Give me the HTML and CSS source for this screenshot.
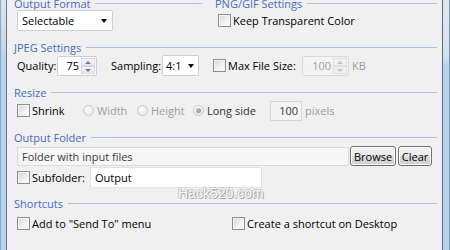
FILE: index.html
```html
<!DOCTYPE html>
<html>
<head>
<meta charset="utf-8">
<link rel="stylesheet" href="styles.css">
</head>
<body>
<div class="window">
  <div class="frame frame-left"></div>
  <main class="content">
    <div class="top-row">
      <section class="group group-format">
        <div class="legend"><span>Output Format</span><i></i></div>
        <div class="body">
          <div class="select select-format"><span>Selectable</span><b class="arrow"></b></div>
        </div>
      </section>
      <section class="group group-png">
        <div class="legend"><span>PNG/GIF Settings</span><i></i></div>
        <div class="body">
          <label class="check"><span class="box"></span><span>Keep Transparent Color</span></label>
        </div>
      </section>
    </div>

    <section class="group group-jpeg">
      <div class="legend"><span>JPEG Settings</span><i></i></div>
      <div class="body">
        <span class="lbl w-quality">Quality:</span>
        <div class="spin spin-quality"><span class="val">75</span><span class="spin-btns"><span class="up"></span><span class="down"></span></span></div>
        <span class="lbl w-sampling">Sampling:</span>
        <div class="select select-sampling"><span>4:1</span><b class="arrow"></b></div>
        <label class="check w-maxsize"><span class="box"></span><span>Max File Size:</span></label>
        <div class="spin spin-size disabled"><span class="val">100</span><span class="spin-btns"><span class="up"></span><span class="down"></span></span></div>
        <span class="lbl dim">KB</span>
      </div>
    </section>

    <section class="group group-resize">
      <div class="legend"><span>Resize</span><i></i></div>
      <div class="body">
        <label class="check w-shrink"><span class="box"></span><span>Shrink</span></label>
        <label class="radio w-width dim"><span class="dot"></span><span>Width</span></label>
        <label class="radio w-height dim"><span class="dot"></span><span>Height</span></label>
        <label class="radio w-long"><span class="dot on"></span><span>Long side</span></label>
        <div class="field field-px">100</div>
        <span class="lbl dim">pixels</span>
      </div>
    </section>

    <section class="group group-folder">
      <div class="legend"><span>Output Folder</span><i></i></div>
      <div class="body">
        <div class="field field-folder">Folder with input files</div>
        <button class="btn btn-browse">Browse</button>
        <button class="btn btn-clear">Clear</button>
      </div>
      <div class="body body-sub">
        <label class="check w-sub"><span class="box"></span><span>Subfolder:</span></label>
        <div class="field field-sub">Output</div>
      </div>
    </section>

    <section class="group group-short">
      <div class="legend"><span>Shortcuts</span><i></i></div>
      <div class="body">
        <label class="check w-sendto"><span class="box"></span><span>Add to "Send To" menu</span></label>
        <label class="check"><span class="box"></span><span>Create a shortcut on Desktop</span></label>
      </div>
    </section>

    <div class="watermark">Hack520.com</div>
  </main>
  <div class="frame frame-right"></div>
</div>
</body>
</html>
```

FILE: styles.css
```css
html, body {
  margin: 0;
  padding: 0;
}
body {
  width: 450px;
  height: 250px;
  overflow: hidden;
  background: #f0f0f0;
  font-family: "Open Sans", "Liberation Sans", sans-serif;
  font-size: 11px;
  color: #000;
}
.window {
  display: flex;
  height: 250px;
}
.frame-left {
  width: 7px;
  flex: none;
  background:
    linear-gradient(to right, #8fa4bf 0 1px, transparent 1px 6px, #6a7688 6px 7px),
    linear-gradient(to bottom, #dbe4ee 0, #c6d8ec 45px, #b6d3f2 60px, #b6d3f2 100%);
}
.frame-right {
  width: 8px;
  flex: none;
  background:
    linear-gradient(to right, #5e6979 0 1px, transparent 1px 7px, #7d93ae 7px 8px),
    linear-gradient(to bottom, #e1e8f0 0, #d4e2f0 55px, #b6d3f2 65px, #b6d3f2 100%);
}
.content {
  position: relative;
  flex: 1;
  padding: 0 5px 0 7px;
}
.top-row {
  display: flex;
  margin-top: -4px;
}
.group-format { width: 188px; margin-right: 13px; }
.group-png { flex: 1; }

.legend {
  display: flex;
  align-items: center;
  height: 14px;
  color: #4b69c6;
  white-space: nowrap;
}
.legend span { padding-right: 5px; }
.legend i {
  flex: 1;
  height: 1px;
  background: #b3bee9;
}
.body {
  display: flex;
  align-items: center;
  height: 21px;
  padding-left: 3px;
  white-space: nowrap;
}
.group-jpeg { margin-top: 9px; }
.group-jpeg .body { margin-top: 1px; }
.group-resize { margin-top: 9px; }
.group-resize .body { margin-top: 1px; }
.group-folder { margin-top: 9px; }
.group-folder .body { margin-top: 2px; height: 20px; }
.group-folder .body-sub { margin-top: 1px; height: 21px; }
.group-short { margin-top: 8px; }
.group-short .body { margin-top: 3px; }

/* labels */
.lbl { display: inline-block; }
.dim { color: #9d9d9d; }
.w-quality { width: 40px; }
.w-sampling { width: 51px; }
.w-maxsize { width: 89px; }
.w-shrink { width: 66px; }
.w-width { width: 54px; }
.w-height { width: 56px; }
.w-long { width: 77px; color: #333; }
.w-sub { width: 73px; }
.w-sendto { width: 215px; }

/* select */
.select {
  position: relative;
  box-sizing: border-box;
  height: 21px;
  background: #fff;
  border: 1px solid #cfcfcf;
  border-radius: 2px;
  display: flex;
  align-items: center;
  padding-left: 4px;
}
.select-format { width: 96px; }
.select-sampling { width: 37px; margin-right: 14px; padding-left: 3px; }
.select .arrow {
  position: absolute;
  right: 5px;
  top: 8px;
  width: 0;
  height: 0;
  border-left: 3.5px solid transparent;
  border-right: 3.5px solid transparent;
  border-top: 4px solid #000;
}
.select-sampling .arrow { right: 4px; }

/* checkbox */
.check, .radio {
  display: inline-flex;
  align-items: center;
}
.box {
  box-sizing: border-box;
  width: 13px;
  height: 13px;
  border: 1px solid #8e8f8f;
  background: linear-gradient(135deg, #d6d6d6 0%, #f2f2f2 60%, #fcfcfc 100%);
  box-shadow: inset 0 0 0 1px #f4f4f4;
  margin-right: 2px;
  flex: none;
}
.dot {
  box-sizing: border-box;
  width: 11px;
  height: 11px;
  border: 1px solid #c9c9c9;
  border-radius: 50%;
  background: radial-gradient(circle at 40% 35%, #fafafa, #e6e6e6);
  margin-right: 3px;
  flex: none;
  position: relative;
}
.dot.on::after {
  content: "";
  position: absolute;
  left: 2px;
  top: 2px;
  width: 5px;
  height: 5px;
  border-radius: 50%;
  background: radial-gradient(circle at 40% 35%, #bdbdbd, #8a8a8a);
}

/* spin */
.spin {
  box-sizing: border-box;
  height: 20px;
  background: #fff;
  border: 1px solid #cfcfcf;
  border-radius: 2px;
  display: flex;
  align-items: stretch;
}
.spin-quality { width: 40px; margin-right: 14px; }
.spin-size { width: 47px; margin-right: 3px; }
.spin .val {
  flex: 1;
  text-align: right;
  padding-right: 2px;
  line-height: 18px;
}
.spin-btns {
  width: 14px;
  display: flex;
  flex-direction: column;
  padding: 1px 1px 1px 0;
}
.spin-btns span {
  flex: 1;
  border: 1px solid #d3d9e3;
  background: linear-gradient(#f7f7f7, #e8e8e8);
  position: relative;
}
.spin-btns .up::after,
.spin-btns .down::after {
  content: "";
  position: absolute;
  left: 3px;
  width: 0;
  height: 0;
  border-left: 3px solid transparent;
  border-right: 3px solid transparent;
}
.spin-btns .up::after { top: 2px; border-bottom: 3px solid #6c7fa4; }
.spin-btns .down::after { top: 2px; border-top: 3px solid #6c7fa4; }
.spin.disabled { background: #f4f4f4; border-color: #d9d9d9; color: #a0a0a0; }
.spin.disabled .spin-btns span { border-color: #e0e0e0; background: #f1f1f1; }
.spin.disabled .spin-btns .up::after { border-bottom-color: #c2c2c2; }
.spin.disabled .spin-btns .down::after { border-top-color: #c2c2c2; }

/* text fields */
.field {
  box-sizing: border-box;
  border: 1px solid #d5d5d5;
  background: #fff;
  display: flex;
  align-items: center;
}
.field-px {
  width: 32px;
  height: 20px;
  justify-content: flex-end;
  padding-right: 3px;
  margin-right: 3px;
  color: #333;
  background: #f4f4f4;
}
.field-folder {
  width: 332px;
  height: 19px;
  margin-right: 1px;
  padding-left: 4px;
  background: #f6f6f6;
  border-color: #dadada;
  color: #3c3c3c;
}
.field-sub {
  width: 172px;
  height: 21px;
  padding-left: 4px;
  border-color: #e2e2e2;
}

/* buttons */
.btn {
  box-sizing: border-box;
  height: 20px;
  border: 1px solid #707070;
  border-radius: 3px;
  background: linear-gradient(#f2f2f2 0%, #ebebeb 50%, #dddddd 51%, #cfcfcf 100%);
  box-shadow: inset 0 0 0 1px #fcfcfc;
  font-family: "Open Sans", "Liberation Sans", sans-serif;
  font-size: 11px;
  color: #000;
  padding: 0;
}
.btn-browse { width: 46px; margin-right: 2px; }
.btn-clear { width: 34px; }

/* watermark */
.watermark {
  position: absolute;
  left: 171px;
  top: 185px;
  font-family: "Liberation Sans", sans-serif;
  font-size: 14px;
  color: #fafafa;
  text-shadow: 1px 1px 0 #a8a8a8, -1px 0 0 #c4c4c4, 0 -1px 0 #c4c4c4;
}
```
